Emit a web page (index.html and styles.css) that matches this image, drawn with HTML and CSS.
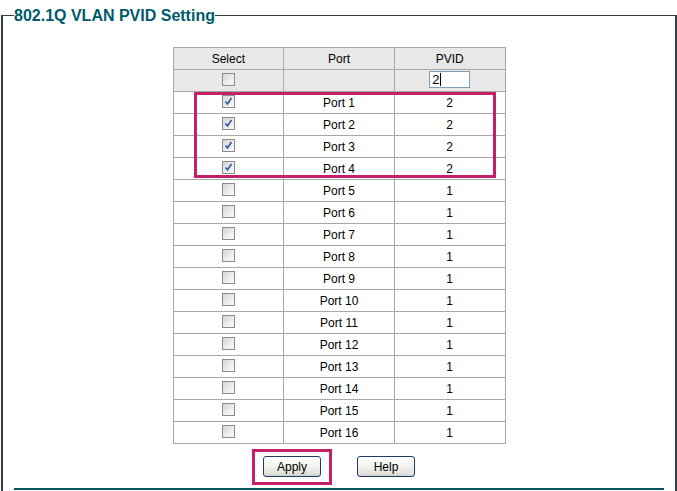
FILE: index.html
```html
<!DOCTYPE html>
<html>
<head>
<meta charset="utf-8">
<link rel="stylesheet" href="styles.css">
</head>
<body>
<fieldset class="panel">
  <legend class="panel-title">802.1Q VLAN PVID Setting</legend>
  <div class="table-wrap">
    <table class="pvid-table">
      <tr class="head"><th>Select</th><th>Port</th><th>PVID</th></tr>
      <tr class="head"><td class="sel"><span class="cb"></span></td><td></td><td class="inp"><span class="pvid-input">2<span class="caret"></span></span></td></tr>
      <tr><td class="sel"><span class="cb on"><svg viewBox="0 0 11 11" width="11" height="11"><path d="M2.5 5.5 L4.5 8 L8.5 2" fill="none" stroke="#2f55a8" stroke-width="1.6"/></svg></span></td><td>Port 1</td><td>2</td></tr>
      <tr><td class="sel"><span class="cb on"><svg viewBox="0 0 11 11" width="11" height="11"><path d="M2.5 5.5 L4.5 8 L8.5 2" fill="none" stroke="#2f55a8" stroke-width="1.6"/></svg></span></td><td>Port 2</td><td>2</td></tr>
      <tr><td class="sel"><span class="cb on"><svg viewBox="0 0 11 11" width="11" height="11"><path d="M2.5 5.5 L4.5 8 L8.5 2" fill="none" stroke="#2f55a8" stroke-width="1.6"/></svg></span></td><td>Port 3</td><td>2</td></tr>
      <tr><td class="sel"><span class="cb on"><svg viewBox="0 0 11 11" width="11" height="11"><path d="M2.5 5.5 L4.5 8 L8.5 2" fill="none" stroke="#2f55a8" stroke-width="1.6"/></svg></span></td><td>Port 4</td><td>2</td></tr>
      <tr><td class="sel"><span class="cb"></span></td><td>Port 5</td><td>1</td></tr>
      <tr><td class="sel"><span class="cb"></span></td><td>Port 6</td><td>1</td></tr>
      <tr><td class="sel"><span class="cb"></span></td><td>Port 7</td><td>1</td></tr>
      <tr><td class="sel"><span class="cb"></span></td><td>Port 8</td><td>1</td></tr>
      <tr><td class="sel"><span class="cb"></span></td><td>Port 9</td><td>1</td></tr>
      <tr><td class="sel"><span class="cb"></span></td><td>Port 10</td><td>1</td></tr>
      <tr><td class="sel"><span class="cb"></span></td><td>Port 11</td><td>1</td></tr>
      <tr><td class="sel"><span class="cb"></span></td><td>Port 12</td><td>1</td></tr>
      <tr><td class="sel"><span class="cb"></span></td><td>Port 13</td><td>1</td></tr>
      <tr><td class="sel"><span class="cb"></span></td><td>Port 14</td><td>1</td></tr>
      <tr><td class="sel"><span class="cb"></span></td><td>Port 15</td><td>1</td></tr>
      <tr><td class="sel"><span class="cb"></span></td><td>Port 16</td><td>1</td></tr>
    </table>
    <div class="mark mark-rows"></div>
  </div>
  <div class="buttons">
    <span class="btn-holder"><button class="btn">Apply</button><span class="mark mark-btn"></span></span>
    <button class="btn">Help</button>
  </div>
  <div class="rule"></div>
</fieldset>
</body>
</html>
```

FILE: styles.css
```css
html, body {
  margin: 0;
  padding: 0;
  background: #fff;
  font-family: "Liberation Sans", Arial, sans-serif;
  font-size: 12px;
  color: #000;
}

.panel {
  margin: 6px 0 0 1px;
  padding: 0 11px;
  border: 2px solid #333d45;
  border-top-width: 1px;
  min-height: 600px;
}

.panel-title {
  padding: 0;
  font-size: 16px;
  font-weight: bold;
  line-height: 19px;
  color: #005a6c;
}

.table-wrap {
  position: relative;
  width: 333px;
  margin: 22px auto 0;
}

.pvid-table {
  width: 333px;
  border-collapse: collapse;
  table-layout: fixed;
}

.pvid-table th,
.pvid-table td {
  height: 21px;
  padding: 0;
  border: 1px solid #a8a8a8;
  text-align: center;
  vertical-align: middle;
  font-weight: normal;
  font-size: 12px;
  line-height: 14px;
}

.pvid-table tr.head th,
.pvid-table tr.head td {
  background: #e8e8e8;
}

.pvid-table td.sel {
  vertical-align: top;
  padding-top: 3px;
  height: 18px;
}

.cb {
  display: inline-block;
  box-sizing: border-box;
  width: 13px;
  height: 13px;
  border: 1px solid #8c8c8c;
  background: linear-gradient(135deg, #d4d4d4 0%, #ececec 55%, #fbfbfb 100%);
  vertical-align: top;
}

.cb svg {
  display: block;
}

.pvid-table td.inp {
  vertical-align: top;
  padding-top: 1px;
  height: 20px;
}

.pvid-input {
  display: inline-block;
  box-sizing: border-box;
  width: 41px;
  height: 17px;
  border: 1px solid #7f9db9;
  background: #fff;
  text-align: left;
  padding-left: 2px;
  font-size: 13px;
  line-height: 15px;
  vertical-align: top;
}

.caret {
  display: inline-block;
  width: 1px;
  height: 13px;
  background: #000;
  vertical-align: -2px;
  margin-left: 1px;
}

.mark {
  position: absolute;
  box-sizing: border-box;
  border: 3px solid #c51f6b;
  pointer-events: none;
}

.mark-rows {
  left: 21px;
  top: 45px;
  width: 302px;
  height: 86px;
}

.buttons {
  display: flex;
  justify-content: center;
  gap: 36px;
  margin-top: 12px;
}

.btn-holder {
  position: relative;
  display: inline-block;
}

.mark-btn {
  left: -11px;
  top: -7px;
  right: -11px;
  bottom: -8px;
}

.btn {
  display: block;
  box-sizing: border-box;
  width: 58px;
  height: 21px;
  margin: 0;
  padding: 0;
  border: 1px solid #1e3c66;
  border-radius: 3px;
  background: linear-gradient(to bottom, #ffffff 0%, #f3f3ef 45%, #e3e2dc 85%, #d2d0c8 100%);
  font-family: "Liberation Sans", Arial, sans-serif;
  font-size: 12px;
  color: #000;
}

.rule {
  margin-top: 11px;
  border-top: 2px solid #00535f;
}
```
